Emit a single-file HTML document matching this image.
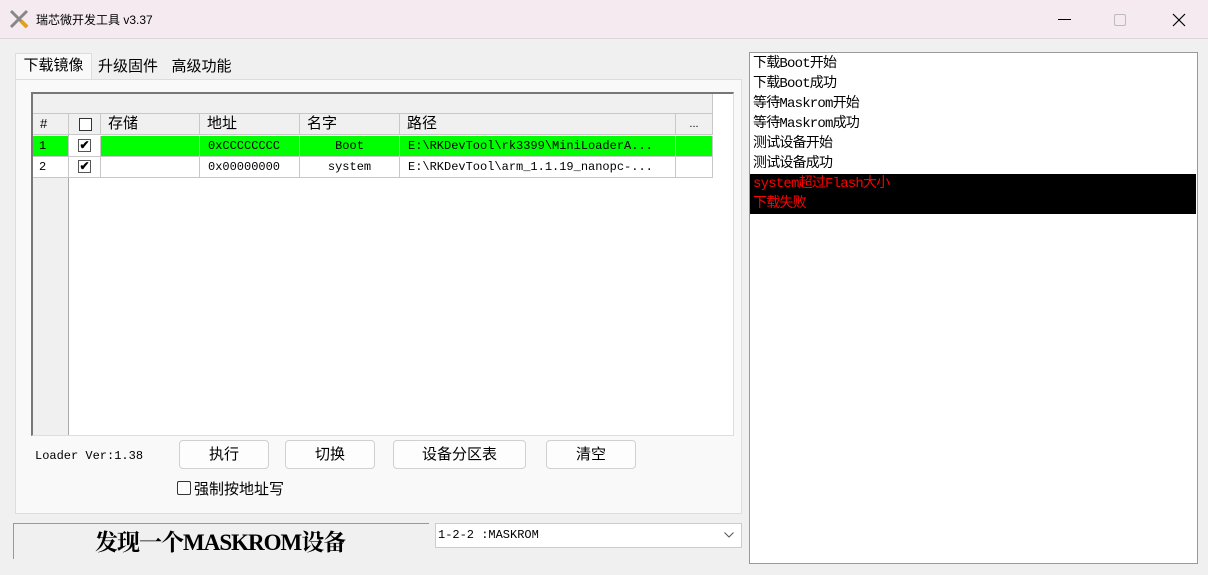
<!DOCTYPE html>
<html><head><meta charset="utf-8"><style>
*{margin:0;padding:0;box-sizing:border-box}
body{width:1208px;height:575px;overflow:hidden;background:#f0f0f0;font-family:"Liberation Sans","Noto Sans CJK SC",sans-serif;position:relative;color:#000}
.a{position:absolute}
.title{left:0;top:0;width:1208px;height:39px;background:#f4eaf0;border-bottom:1px solid #dcd6da}
.mono{font-family:"Liberation Mono","Noto Sans CJK SC",monospace}
.tab{top:55px;height:25px;font-size:15px;line-height:24px;text-align:center;background:#f0f0f0}
.btn{top:440px;height:29px;background:#fdfdfd;border:1px solid #d0d0d0;border-radius:4px;font-size:15px;line-height:27px;text-align:center}
.cell{position:absolute;border-right:1px solid #c8c8c8;border-bottom:1px solid #c8c8c8;height:21px;font-size:12px;line-height:20px}
.hd{font-size:15px;line-height:20px;padding-left:7px}
.log div{height:20px;font-size:14px;line-height:20px;padding-left:3px;font-family:"Liberation Mono","Noto Sans CJK SC",monospace;letter-spacing:-0.8px}
.cb{position:absolute;width:13px;height:13px;border:1px solid #555;background:#fff;font-size:12px;line-height:11px;text-align:center;font-weight:bold}
</style></head><body>
<div class="a title"></div>
<svg class="a" style="left:8px;top:8px" width="22" height="22" viewBox="0 0 22 22"><path d="M3 3L19 19M19 3L3 19" stroke="#888" stroke-width="3"/><path d="M13 13L19 19" stroke="#e0a020" stroke-width="4"/></svg>
<div class="a" style="left:36px;top:11px;font-size:12px">瑞芯微开发工具 v3.37</div>
<div class="a" style="left:1058px;top:19px;width:13px;height:1px;background:#000"></div>
<div class="a" style="left:1114px;top:14px;width:12px;height:12px;border:1px solid #bbb;border-radius:2px"></div>
<svg class="a" style="left:1172px;top:13px" width="14" height="14"><path d="M1 1L13 13M13 1L1 13" stroke="#000" stroke-width="1.2"/></svg>

<div class="a tab" style="left:15px;width:77px;top:53px;height:27px;background:#f9f9f9;border:1px solid #ddd;border-bottom:none">下载镜像</div>
<div class="a tab" style="left:93px;width:70px">升级固件</div>
<div class="a tab" style="left:166px;width:71px">高级功能</div>
<div class="a" style="left:15px;top:79px;width:727px;height:435px;background:#f9f9f9;border:1px solid #ddd"></div>

<div class="a" style="left:31px;top:92px;width:703px;height:344px;background:#fff;border:2px solid #777;border-right:1px solid #ddd;border-bottom:1px solid #ddd"></div>
<div class="a" style="left:33px;top:94px;width:680px;height:20px;background:#f0f0f0;border-right:1px solid #c8c8c8;border-bottom:1px solid #c8c8c8"></div>
<div class="a" style="left:33px;top:114px;width:36px;height:321px;background:#f0f0f0;border-right:1px solid #aaa"></div>
<div class="cell hd" style="left:33px;top:114px;width:36px;background:#f0f0f0;font-size:13px">#</div>
<div class="cell hd" style="left:69px;top:114px;width:32px;background:#f0f0f0"><div class="cb" style="left:10px;top:4px;border-color:#333"></div></div>
<div class="cell hd" style="left:101px;top:114px;width:99px;background:#f0f0f0">存储</div>
<div class="cell hd" style="left:200px;top:114px;width:100px;background:#f0f0f0">地址</div>
<div class="cell hd" style="left:300px;top:114px;width:100px;background:#f0f0f0">名字</div>
<div class="cell hd" style="left:400px;top:114px;width:276px;background:#f0f0f0">路径</div>
<div class="cell hd" style="left:676px;top:114px;width:37px;background:#f0f0f0;font-size:11px;text-align:center;padding:0">...</div>

<div class="cell mono" style="left:33px;top:136px;width:36px;background:#00ff00;padding-left:6px">1</div>
<div class="cell" style="left:69px;top:136px;width:32px;background:#fff"><div class="cb" style="left:9px;top:3px">✔</div></div>
<div class="cell" style="left:101px;top:136px;width:99px;background:#00ff00"></div>
<div class="cell mono" style="left:200px;top:136px;width:100px;background:#00ff00;padding-left:8px">0xCCCCCCCC</div>
<div class="cell mono" style="left:300px;top:136px;width:100px;background:#00ff00;text-align:center">Boot</div>
<div class="cell mono" style="left:400px;top:136px;width:276px;background:#00ff00;padding-left:8px">E:\RKDevTool\rk3399\MiniLoaderA...</div>
<div class="cell" style="left:676px;top:136px;width:37px;background:#00ff00"></div>

<div class="cell mono" style="left:33px;top:157px;width:36px;background:#fff;padding-left:6px">2</div>
<div class="cell" style="left:69px;top:157px;width:32px;background:#fff"><div class="cb" style="left:9px;top:3px">✔</div></div>
<div class="cell" style="left:101px;top:157px;width:99px;background:#fff"></div>
<div class="cell mono" style="left:200px;top:157px;width:100px;background:#fff;padding-left:8px">0x00000000</div>
<div class="cell mono" style="left:300px;top:157px;width:100px;background:#fff;text-align:center">system</div>
<div class="cell mono" style="left:400px;top:157px;width:276px;background:#fff;padding-left:8px">E:\RKDevTool\arm_1.1.19_nanopc-...</div>
<div class="cell" style="left:676px;top:157px;width:37px;background:#fff"></div>

<div class="a mono" style="left:35px;top:449px;font-size:12px">Loader Ver:1.38</div>
<div class="a btn" style="left:179px;width:90px">执行</div>
<div class="a btn" style="left:285px;width:90px">切换</div>
<div class="a btn" style="left:393px;width:133px">设备分区表</div>
<div class="a btn" style="left:546px;width:90px">清空</div>
<div class="cb" style="left:177px;top:481px;width:14px;height:14px;border-color:#333;border-radius:2px"></div>
<div class="a" style="left:194px;top:478px;font-size:15px">强制按地址写</div>

<div class="a" style="left:13px;top:523px;width:416px;height:36px;border-top:1px solid #999;border-left:1px solid #999;background:#f0f0f0"></div>
<div class="a" style="left:95px;top:524px;font-size:23px;letter-spacing:-1px;font-weight:bold;font-family:'Liberation Serif','Noto Serif CJK SC',serif">发现一个MASKROM设备</div>
<div class="a" style="left:435px;top:523px;width:307px;height:25px;background:#fff;border:1px solid #ccc"></div>
<div class="a mono" style="left:438px;top:528px;font-size:12px">1-2-2 :MASKROM</div>
<svg class="a" style="left:724px;top:532px" width="10" height="6"><path d="M0.5 0.5L5 5L9.5 0.5" stroke="#555" fill="none"/></svg>

<div class="a log" style="left:749px;top:52px;width:449px;height:512px;background:#fff;border:1px solid #999;padding-top:1px">
<div>下载Boot开始</div><div>下载Boot成功</div><div>等待Maskrom开始</div><div>等待Maskrom成功</div><div>测试设备开始</div><div>测试设备成功</div>
<div style="background:#000;color:#f00;margin-right:1px">system超过Flash大小</div><div style="background:#000;color:#f00;margin-right:1px">下载失败</div>
</div>
</body></html>
